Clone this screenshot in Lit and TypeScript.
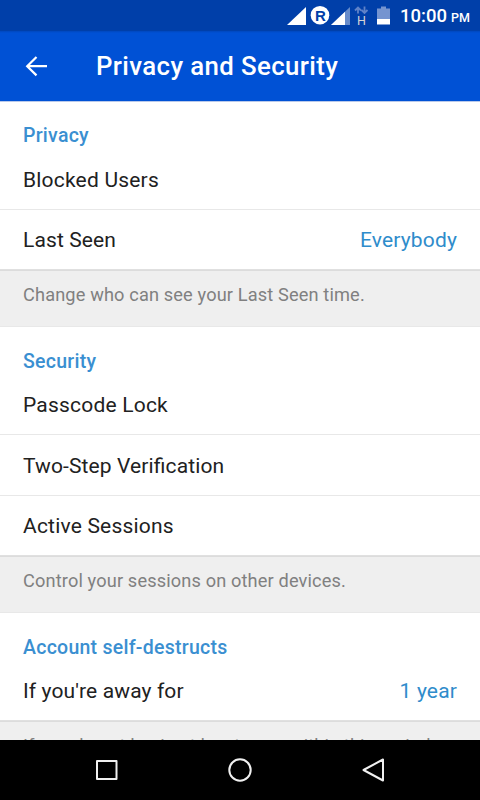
import { LitElement, html, css, svg, nothing } from "lit";
import { customElement } from "lit/decorators.js";

interface Row { label: string; value?: string; cls?: string }
interface Section { title: string; rows: Row[]; note: string }

const SECTIONS: Section[] = [
  {
    title: "Privacy",
    rows: [{ label: "Blocked Users", cls: "wide" }, { label: "Last Seen", value: "Everybody" }],
    note: "Change who can see your Last Seen time.",
  },
  {
    title: "Security",
    rows: [{ label: "Passcode Lock", cls: "wide low" }, { label: "Two-Step Verification", cls: "tall" }, { label: "Active Sessions", cls: "wide" }],
    note: "Control your sessions on other devices.",
  },
  {
    title: "Account self-destructs",
    rows: [{ label: "If you're away for", value: "1 year" }],
    note: "If you do not log in at least once within this period, your account will be deleted along with all groups, messages and contacts.",
  },
];

@customElement("app-root")
export class AppRoot extends LitElement {
  static styles = css`
    :host {
      display: flex;
      flex-direction: column;
      width: 480px;
      height: 800px;
      overflow: hidden;
      background: #fff;
      font-family: Roboto, sans-serif;
      font-feature-settings: "liga" 1;
    }
    .status {
      flex: none;
      height: 31px;
      background: #003fa9;
      display: flex;
      color: #fff;
    }
    .signals { flex: none; width: 396px; height: 31px; }
    .reg { font: 700 15px "Liberation Sans", sans-serif; }
    .net { font: 400 12.5px Roboto, sans-serif; }
    .clock {
      margin-left: 4px;
      font-weight: 500;
      font-size: 18.5px;
      line-height: 33px;
      white-space: nowrap;
    }
    .clock small { font-size: 12.5px; margin-left: 4px; }
    .bar {
      flex: none;
      height: 71px;
      box-sizing: border-box;
      border-bottom: 1px solid #b9c9ea;
      background: linear-gradient(#0047bd, #0051d5 2px);
      display: flex;
      align-items: center;
      color: #fff;
    }
    .back { flex: none; width: 96px; height: 70px; }
    .bar h1 { margin: 0; font-weight: 500; font-size: 25.8px; line-height: 71px; letter-spacing: 0.38px; white-space: nowrap; }
    .list { flex: 1; min-height: 0; overflow: hidden; background: #efefef; }
    .section { background: #fff; }
    .title {
      margin: 0;
      height: 48px;
      padding: 0 23px;
      font-weight: 500;
      font-size: 19.5px;
      line-height: 69px;
      letter-spacing: 0.26px;
      color: #3a8fd1;
    }
    .first { line-height: 67px; }
    .row {
      height: 60px;
      box-sizing: border-box;
      padding: 0 23px;
      border-bottom: 1px solid #e8e8e8;
      display: flex;
      justify-content: space-between;
      font-size: 21px;
      line-height: 60px;
      letter-spacing: 0.12px;
      color: #212121;
      white-space: nowrap;
    }
    .wide { letter-spacing: 0.2px; }
    .low { line-height: 61px; }
    .tall { height: 61px; line-height: 63px; }
    .row:last-child { border-bottom-color: #e0e0e0; }
    .value { color: #2f8ccb; letter-spacing: 0.15px; }
    .note {
      height: 57px;
      box-sizing: border-box;
      margin: 0;
      padding: 12px 23px 0;
      border-top: 1px solid #dcdcdc;
      border-bottom: 1px solid #e8e8e8;
      background: #efefef;
      font-size: 18.2px;
      line-height: 24px;
      letter-spacing: 0.14px;
      color: #808080;
    }
    .nav { flex: none; height: 60px; background: #000; }
    svg { display: block; }
  `;

  private signals() {
    return html`<svg class="signals" viewBox="0 0 396 31">
      ${svg`
        <path d="M287 25 306 7v18z" fill="#fff"/>
        <circle cx="320" cy="15.2" r="9.300" fill="#fff"/>
        <text class="reg" x="320.300" y="20.600" text-anchor="middle" fill="#003fa9">R</text>
        <path d="M331 25 350 7v18z" fill="#fff" opacity=".4"/>
        <path d="M331 25 345 11.700V25z" fill="#fff"/>
        <path d="M358 13.500V8M355 10.500 358 7.500l3 3M364.500 6.500v6M361.500 10l3 3 3-3" fill="none" stroke="#5f82c8" stroke-width="1.800"/>
        <text class="net" x="361.500" y="25" text-anchor="middle" fill="#d4d4d4">H</text>
        <path d="M377 8.500h4V6.500h5v2h4v11h-13z" fill="#7594d0"/>
        <path d="M377 19h13v5.500h-13z" fill="#fff"/>`}
    </svg>`;
  }

  private section(s: Section, i: number) {
    return html`
      <section class="section">
        <h2 class="title ${i === 0 ? "first" : ""}">${s.title}</h2>
        ${s.rows.map((r) => html`<div class="row ${r.cls ?? ""}">
          <span class="label">${r.label}</span>${r.value ? html`<span class="value">${r.value}</span>` : nothing}
        </div>`)}
      </section>
      <p class="note">${s.note}</p>`;
  }

  render() {
    return html`
      <div class="status">${this.signals()}<div class="clock">10:00<small>PM</small></div></div>
      <header class="bar">
        <svg class="back" viewBox="0 0 96 70">
          <path d="M36.500 26 27.200 35.200l9.300 9.200M27.500 35.200H47" fill="none" stroke="#fff" stroke-width="2.200"/>
        </svg>
        <h1>Privacy and Security</h1>
      </header>
      <main class="list">${SECTIONS.map((s, i) => this.section(s, i))}</main>
      <svg class="nav" viewBox="0 0 480 60" fill="none" stroke="#f0f0f0" stroke-width="2" stroke-linejoin="round">
        <rect x="97" y="21" width="19.500" height="18"/>
        <circle cx="240" cy="30" r="10.700"/>
        <path d="M383 19.500v21L363.500 30z"/>
      </svg>`;
  }
}
